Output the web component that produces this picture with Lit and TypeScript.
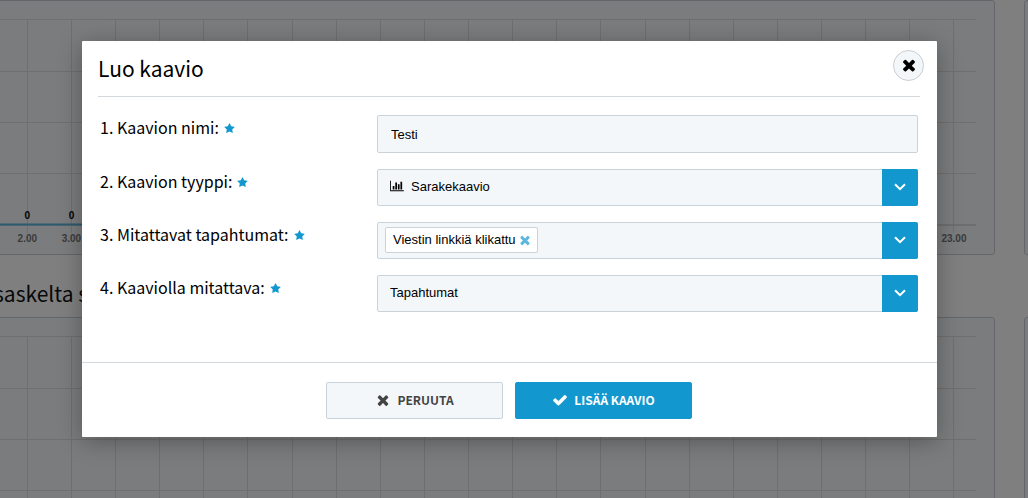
import { LitElement, html, svg, css } from 'lit'
import { customElement, property, state } from 'lit/decorators.js'

const HOURS = Array.from({ length: 24 }, (_, i) => i)
const GRID_ROWS = [19, 71, 122, 173]
const AXIS_Y = 224

const timesIcon = html`<svg viewBox="0 0 1792 1792" aria-hidden="true">
  <path
    fill="currentColor"
    d="M1490 1322q0 40-28 68l-136 136q-28 28-68 28t-68-28l-294-294-294 294q-28 28-68 28t-68-28l-136-136q-28-28-28-68t28-68l294-294-294-294q-28-28-28-68t28-68l136-136q28-28 68-28t68 28l294 294 294-294q28-28 68-28t68 28l136 136q28 28 28 68t-28 68l-294 294 294 294q28 28 28 68z"
  />
</svg>`

const checkIcon = html`<svg viewBox="0 0 1792 1792" aria-hidden="true">
  <path
    fill="currentColor"
    d="M1671 566q0 40-28 68l-724 724-136 136q-28 28-68 28t-68-28l-136-136-362-362q-28-28-28-68t28-68l136-136q28-28 68-28t68 28l294 295 656-657q28-28 68-28t68 28l136 136q28 28 28 68z"
  />
</svg>`

const starIcon = html`<svg class="star" viewBox="0 0 1792 1792" aria-hidden="true">
  <path
    fill="currentColor"
    d="M1728 647q0 22-26 48l-363 354 86 500q1 7 1 20 0 21-10.5 35.5t-30.5 14.5q-19 0-40-12l-449-236-449 236q-22 12-40 12-21 0-31.5-14.5t-10.5-35.5q0-6 2-20l86-500-364-354q-25-27-25-48 0-37 56-46l502-73 225-455q19-41 49-41t49 41l225 455 502 73q56 9 56 46z"
  />
</svg>`

const barsIcon = html`<svg class="bars" viewBox="0 0 2048 1792" aria-hidden="true">
  <path
    fill="currentColor"
    d="M640 896v512h-256v-512h256zm384-512v1024h-256v-1024h256zm1024 1152v128h-2048v-1536h128v1408h1920zm-640-896v768h-256v-768h256zm384-384v1152h-256v-1152h256z"
  />
</svg>`

const chevronIcon = html`<svg viewBox="0 0 12 8" aria-hidden="true">
  <path
    fill="none"
    stroke="currentColor"
    stroke-width="2"
    d="M1 1.2 6 6.2 11 1.2"
  />
</svg>`

@customElement('event-chart')
export class EventChart extends LitElement {
  static styles = css`
    :host {
      display: block;
      box-sizing: border-box;
      height: 255px;
      padding: 0 18px;
      border: 1px solid #c8cdd2;
      border-radius: 3px;
      background: #f5f8fb;
    }
    svg {
      display: block;
      width: 100%;
      height: 253px;
      margin-top: -1px;
      overflow: visible;
      font-family: 'Liberation Sans', Arial, sans-serif;
      font-size: 10px;
      font-weight: bold;
      text-anchor: middle;
    }
    .grid {
      stroke: #dededc;
      shape-rendering: crispEdges;
    }
    .axis {
      stroke: #dcdcdc;
      stroke-width: 2;
    }
    .series {
      stroke: #58b4dc;
      stroke-width: 2;
    }
    .hour {
      fill: #777;
    }
  `

  @property({ type: Boolean })
  bare = false

  private center(hour: number) {
    return `${((hour + 0.5) / HOURS.length) * 100}%`
  }

  render() {
    if (this.bare) return html``
    return html`
      <svg>
        ${GRID_ROWS.map(
          (y) => svg`<line class="grid" x1="0" x2="100%" y1=${y + 0.5} y2=${y + 0.5} />`,
        )}
        ${HOURS.map(
          (h) => svg`
            <line class="grid" x1=${this.center(h)} x2=${this.center(h)} y1="19" y2="233" />
            <text class="hour" x=${this.center(h)} y="242">${h}.00</text>
          `,
        )}
        <line class="axis" x1="0" x2="100%" y1=${AXIS_Y + 1} y2=${AXIS_Y + 1} />
        <line class="series" x1="0" x2="50%" y1=${AXIS_Y + 0.5} y2=${AXIS_Y + 0.5} />
        ${HOURS.slice(0, 12).map(
          (h) => svg`<text x=${this.center(h)} y="219">0</text>`,
        )}
      </svg>
    `
  }
}

@customElement('app-root')
export class AppRoot extends LitElement {
  static styles = css`
    :host {
      display: block;
      position: relative;
      height: 100vh;
      overflow: hidden;
      background: #fff;
      color: #000;
      font-family: 'Noto Sans CJK SC', 'Open Sans', sans-serif;
    }

    /* Dashboard behind the dialog, scrolled sideways */
    .dashboard {
      display: grid;
      grid-template-columns: 1fr 60px;
      column-gap: 29px;
      margin: 0 -56px 0 -102px;
    }
    .chart-title {
      grid-column: 1 / -1;
      margin: 0;
      padding: 18px 0 4px 96px;
      font-size: 21px;
      font-weight: 400;
      line-height: 40px;
      color: #111;
    }

    .overlay {
      position: absolute;
      inset: 0;
      padding: 41px 91px 40px 82px;
      background: rgba(0, 0, 0, 0.5);
    }
    .modal {
      position: relative;
      border-radius: 1px;
      background: #fff;
      box-shadow: 0 4px 24px rgba(0, 0, 0, 0.3);
    }
    .modal-header {
      margin: 0 17px 0 16px;
      border-bottom: 1px solid #d3d8dc;
    }
    .modal-header h1 {
      margin: 0;
      font-size: 21px;
      font-weight: 400;
      line-height: 55px;
    }
    button {
      cursor: pointer;
    }
    .close {
      position: absolute;
      top: 9px;
      right: 13px;
      display: flex;
      align-items: center;
      justify-content: center;
      width: 31px;
      height: 31px;
      padding: 0 0 2px;
      border: 1px solid #c9cdd1;
      border-radius: 50%;
      background: #f3f7fa;
      color: #000;
    }
    .close svg {
      width: 18px;
      height: 18px;
    }

    .fields {
      display: flex;
      flex-direction: column;
      gap: 16px;
      padding: 18px 19px 50px 18px;
    }
    .row {
      display: grid;
      grid-template-columns: 277px 1fr;
    }
    .label {
      display: flex;
      align-items: center;
      gap: 5px;
      height: 24px;
      font-size: 16px;
      line-height: 24px;
    }
    .star {
      width: 11px;
      height: 11px;
      padding-top: 2px;
      color: #1298cf;
    }
    .control {
      box-sizing: border-box;
      width: 100%;
      height: 37px;
      margin: 0;
      border: 1px solid #cbd3da;
      border-radius: 2px;
      background: #f3f7fa;
      color: #000;
      font-family: 'Liberation Sans', Arial, sans-serif;
      font-size: 13px;
    }
    input.control {
      height: 38px;
      padding: 0 13px;
    }
    .select {
      position: relative;
    }
    select.control {
      appearance: none;
      padding: 0 48px 2px 12px;
    }
    .with-icon select.control {
      padding-left: 33px;
    }
    .bars {
      position: absolute;
      top: 11px;
      left: 13px;
      width: 14px;
      height: 12px;
    }
    .arrow {
      position: absolute;
      top: 0;
      right: 0;
      display: flex;
      align-items: center;
      justify-content: center;
      width: 36px;
      height: 37px;
      padding: 0 0 2px;
      box-sizing: border-box;
      border: 0;
      border-radius: 0 2px 2px 0;
      background: #1298cf;
      color: #fff;
    }
    span.arrow {
      pointer-events: none;
    }
    .arrow svg {
      width: 12px;
      height: 8px;
    }
    .tags {
      display: flex;
      align-items: center;
      gap: 4px;
      padding: 0 40px 2px 7px;
    }
    .tag {
      display: flex;
      align-items: center;
      gap: 2px;
      box-sizing: border-box;
      height: 26px;
      padding: 0 5px 0 7px;
      border: 1px solid #cbd3da;
      border-radius: 2px;
      background: #fff;
    }
    .tag button {
      display: flex;
      padding: 0;
      border: 0;
      background: none;
      color: #5db7de;
    }
    .tag svg {
      width: 14px;
      height: 14px;
    }

    .modal-footer {
      display: flex;
      justify-content: center;
      gap: 12px;
      padding: 19px 17px 18px 16px;
      border-top: 1px solid #d3d8dc;
    }
    .btn {
      display: flex;
      align-items: center;
      justify-content: center;
      gap: 6px;
      box-sizing: border-box;
      width: 177px;
      height: 37px;
      padding: 0 0 2px;
      border: 1px solid #cbd3da;
      border-radius: 2px;
      background: #f3f7fa;
      color: #444;
      font-family: inherit;
      font-size: 12px;
      font-weight: 600;
      line-height: 20px;
    }
    .btn svg {
      width: 16px;
      height: 16px;
    }
    .btn.primary {
      border-color: #1298cf;
      background: #1298cf;
      color: #fff;
    }
  `

  @state()
  private events = ['Viestin linkkiä klikattu']

  private removeEvent(name: string) {
    this.events = this.events.filter((e) => e !== name)
  }

  render() {
    return html`
      <div class="dashboard">
        <event-chart></event-chart>
        <event-chart bare></event-chart>
        <h2 class="chart-title">saskelta s</h2>
        <event-chart></event-chart>
        <event-chart bare></event-chart>
      </div>

      <div class="overlay">
        <div class="modal" role="dialog" aria-modal="true" aria-labelledby="title">
          <header class="modal-header">
            <h1 id="title">Luo kaavio</h1>
            <button class="close" type="button" aria-label="Sulje">${timesIcon}</button>
          </header>

          <form @submit=${(e: Event) => e.preventDefault()}>
            <div class="fields">
              <div class="row">
                <label class="label" for="name">1. Kaavion nimi: ${starIcon}</label>
                <input class="control" id="name" type="text" value="Testi" />
              </div>

              <div class="row">
                <label class="label" for="type">2. Kaavion tyyppi: ${starIcon}</label>
                <div class="select with-icon">
                  <select class="control" id="type">
                    <option>Sarakekaavio</option>
                  </select>
                  ${barsIcon}
                  <span class="arrow">${chevronIcon}</span>
                </div>
              </div>

              <div class="row">
                <label class="label" id="events-label" for="events">
                  3. Mitattavat tapahtumat: ${starIcon}
                </label>
                <div class="select">
                  <div class="control tags">
                    ${this.events.map(
                      (name) => html`
                        <span class="tag">
                          ${name}
                          <button
                            type="button"
                            aria-label="Poista"
                            @click=${() => this.removeEvent(name)}
                          >
                            ${timesIcon}
                          </button>
                        </span>
                      `,
                    )}
                  </div>
                  <button class="arrow" id="events" type="button" aria-labelledby="events-label">
                    ${chevronIcon}
                  </button>
                </div>
              </div>

              <div class="row">
                <label class="label" for="measure">4. Kaaviolla mitattava: ${starIcon}</label>
                <div class="select">
                  <select class="control" id="measure">
                    <option>Tapahtumat</option>
                  </select>
                  <span class="arrow">${chevronIcon}</span>
                </div>
              </div>
            </div>

            <footer class="modal-footer">
              <button class="btn" type="button">${timesIcon} PERUUTA</button>
              <button class="btn primary" type="submit">${checkIcon} LISÄÄ KAAVIO</button>
            </footer>
          </form>
        </div>
      </div>
    `
  }
}

declare global {
  interface HTMLElementTagNameMap {
    'event-chart': EventChart
    'app-root': AppRoot
  }
}
